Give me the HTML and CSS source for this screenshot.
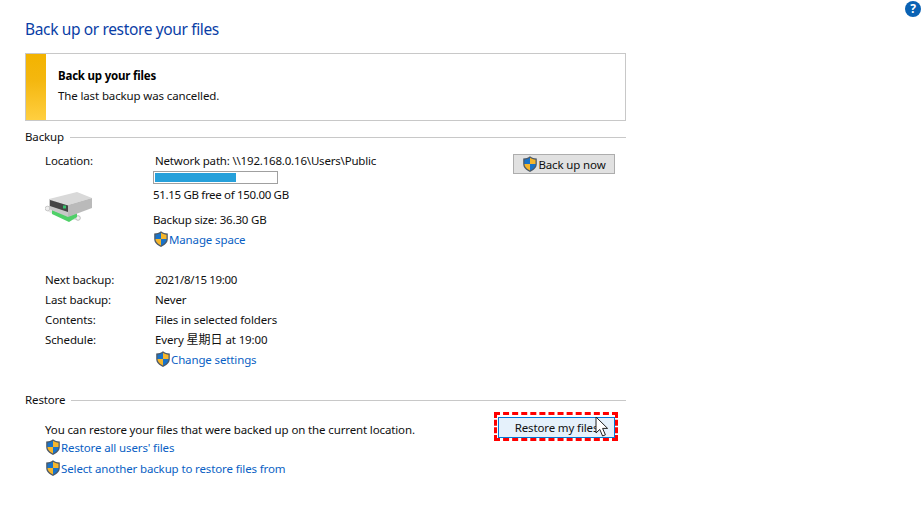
FILE: index.html
```html
<!DOCTYPE html>
<html lang="en">
<head>
<meta charset="utf-8">
<title>Back up or restore your files</title>
<link rel="stylesheet" href="styles.css">
</head>
<body>
<svg width="0" height="0" class="defs">
  <defs>
    <symbol id="shield" viewBox="0 0 16 16">
      <path d="M8 .3 C6 1.800 4 2.400 1.200 2.600 V8 C1.200 11.800 4.400 14.400 8 15.900 C11.600 14.400 14.800 11.800 14.800 8 V2.600 C12 2.400 10 1.800 8 .3Z" fill="#4d5a68"/>
      <path d="M8 1.800 C6.400 2.900 4.600 3.500 2.500 3.700 V8 H8Z" fill="#1a73c8"/>
      <path d="M8 1.800 C9.600 2.900 11.400 3.500 13.500 3.700 V8 H8Z" fill="#f6b62b"/>
      <path d="M2.500 8 H8 V14.400 C5.200 13.200 2.500 11 2.500 8Z" fill="#f6b62b"/>
      <path d="M13.500 8 H8 V14.400 C10.800 13.200 13.500 11 13.500 8Z" fill="#1a73c8"/>
    </symbol>
  </defs>
</svg>
<main class="page">
  <svg class="help" width="16" height="16" viewBox="0 0 16 16" role="img" aria-label="Help">
    <circle cx="8" cy="8" r="8" fill="#0a62b4"/>
    <text x="8" y="12.400" class="help-mark" text-anchor="middle">?</text>
  </svg>

  <h1 class="title">Back up or restore your files</h1>

  <section class="notice">
    <div class="notice-bar"></div>
    <div class="notice-text">
      <div class="notice-head">Back up your files</div>
      <div class="notice-body">The last backup was cancelled.</div>
    </div>
  </section>

  <div class="section-head section-head-backup"><span>Backup</span><i class="rule"></i></div>

  <section class="backup">
    <div class="backup-left">
      <div class="row">Location:</div>
      <svg class="drive" width="50" height="36" viewBox="0 0 50 36">
        <path d="M1 18 L10 23" stroke="#e4e4e4" stroke-width="4"/>
        <circle cx="2.500" cy="18.500" r="2.300" fill="#eee" stroke="#c8c8c8"/>
        <path d="M28 28 L33 28" stroke="#e4e4e4" stroke-width="4"/>
        <circle cx="33" cy="28" r="2.300" fill="#f2f2f2" stroke="#bdbdbd"/>
        <path d="M7 20 L24 26 L32 23 L32 27 L24 32 L7 24Z" fill="#4fd068"/>
        <path d="M4 9 L32 2 L47 8 L23 15Z" fill="#d9d9d9"/>
        <path d="M23 15 L47 8 L47 18 L23 27Z" fill="#bababa"/>
        <path d="M4 9 L23 15 L23 27 L4 19Z" fill="#c8c8c8"/>
        <path d="M5 10 L23 15.500 L23 22 L5 16Z" fill="#454545"/>
        <rect x="18" y="15.500" width="3" height="3" fill="#36c26b"/>
      </svg>
    </div>
    <div class="backup-main">
      <div class="row row-in tight">Network path: \\192.168.0.16\Users\Public</div>
      <div class="meter"><div class="meter-fill" style="width:67%"></div></div>
      <div class="row tighter">51.15 GB free of 150.00 GB</div>
      <div class="row row-size tight">Backup size: 36.30 GB</div>
      <a class="row link"><svg class="shield"><use href="#shield"/></svg>Manage space</a>
    </div>
    <button class="btn btn-backup"><svg class="shield"><use href="#shield"/></svg>Back up now</button>
  </section>

  <section class="schedule">
    <div class="row">Next backup:</div><div class="row row-in tighter">2021/8/15 19:00</div>
    <div class="row">Last backup:</div><div class="row row-in">Never</div>
    <div class="row">Contents:</div><div class="row row-in">Files in selected folders</div>
    <div class="row">Schedule:</div><div class="row row-in">Every <span class="cjk">星期日</span> at 19:00</div>
    <div class="row"></div><a class="row row-in link"><svg class="shield"><use href="#shield"/></svg>Change settings</a>
  </section>

  <div class="section-head section-head-restore"><span>Restore</span><i class="rule"></i></div>

  <section class="restore">
    <div class="restore-left">
      <div class="row row-intro">You can restore your files that were backed up on the current location.</div>
      <a class="row link"><svg class="shield"><use href="#shield"/></svg>Restore all users' files</a>
      <a class="row link row-last"><svg class="shield"><use href="#shield"/></svg>Select another backup to restore files from</a>
    </div>
    <div class="highlight">
      <button class="btn btn-restore">Restore my files</button>
      <svg class="cursor" width="14" height="22" viewBox="0 0 14 22">
        <path d="M1 1 V17 L4.800 13.400 L7.600 20 L10.400 18.800 L7.600 12.400 H12.600Z" fill="#fff" stroke="#222" stroke-width="1"/>
      </svg>
    </div>
  </section>
</main>
</body>
</html>
```
FILE: styles.css
```css
* { box-sizing: border-box; }
html, body { margin: 0; padding: 0; background: #fff; }
body {
  font-family: "Noto Sans", "Noto Sans CJK SC", sans-serif;
  font-size: 11.5px;
  letter-spacing: -0.13px;
  color: #101010;
  width: 923px;
  height: 519px;
  overflow: hidden;
}
.defs { position: absolute; }
.page { position: relative; padding: 19px 297px 0 25px; height: 519px; }
.help { position: absolute; top: 1px; left: 905px; }
.help-mark { font: bold 12px "Noto Sans", sans-serif; fill: #fff; }
.title {
  margin: 0 0 14px;
  font-size: 15.5px;
  letter-spacing: -0.36px;
  font-weight: 400;
  line-height: 20px;
  color: #0a3ea6;
}
.notice { display: flex; height: 68px; border: 1px solid #c8c8c8; }
.notice-bar { width: 20px; background: linear-gradient(#f3b300 0%, #f4b70f 40%, #ffcf40 100%); }
.notice-text { padding: 12px 0 0 12px; }
.notice-head { font-weight: 700; line-height: 20px; color: #000; letter-spacing: -0.2px; }
.notice-body { line-height: 20px; }
.section-head { display: flex; align-items: center; gap: 6px; height: 20px; }
.section-head-backup { margin-top: 5px; }
.section-head-restore { margin-top: 20px; }
.rule { flex: 1; height: 1px; background: #c8c8c8; margin-top: 2px; }
.row { display: flex; align-items: center; height: 20px; white-space: pre; }
.row-in { margin-left: 2px; }
.tight { letter-spacing: -0.19px; }
.tighter { letter-spacing: -0.33px; }
.link { color: #0a5fc4; }
.cjk { font-size: 12px; letter-spacing: 0; }
.shield { width: 16px; height: 16px; flex: none; }
.backup { display: flex; padding: 4px 11px 0 20px; }
.backup-left { width: 108px; }
.drive { display: block; margin-top: 20px; }
.backup-main { flex: 1; }
.meter { width: 125px; height: 13px; margin-top: 1px; border: 1px solid #a0a0a0; padding: 1px; }
.meter-fill { height: 100%; background: #26a0da; }
.row-size { margin-top: 5px; }
.btn {
  font: inherit;
  letter-spacing: inherit;
  color: #101010;
  padding: 0;
  display: flex;
  align-items: center;
  justify-content: center;
}
.btn-backup {
  width: 102px;
  height: 20px;
  margin-top: 4px;
  background: #e1e1e1;
  border: 1px solid #adadad;
}
.schedule { display: grid; grid-template-columns: 108px 1fr; padding: 20px 0 0 20px; }
.restore { display: flex; justify-content: space-between; padding: 0 8px 0 20px; }
.restore-left { padding-top: 12px; }
.row-intro { height: 16px; }
.row-last { margin-top: 1px; }
.highlight {
  position: relative;
  width: 124px;
  height: 29px;
  margin-top: 3px;
  border: 3px dashed #f00;
  padding: 2px 0 0 1px;
}
.btn-restore {
  width: 117px;
  height: 21px;
  background: #e5f1fb;
  border: 1px solid #0078d7;
}
.cursor { position: absolute; left: 98px; top: 1px; }
```
